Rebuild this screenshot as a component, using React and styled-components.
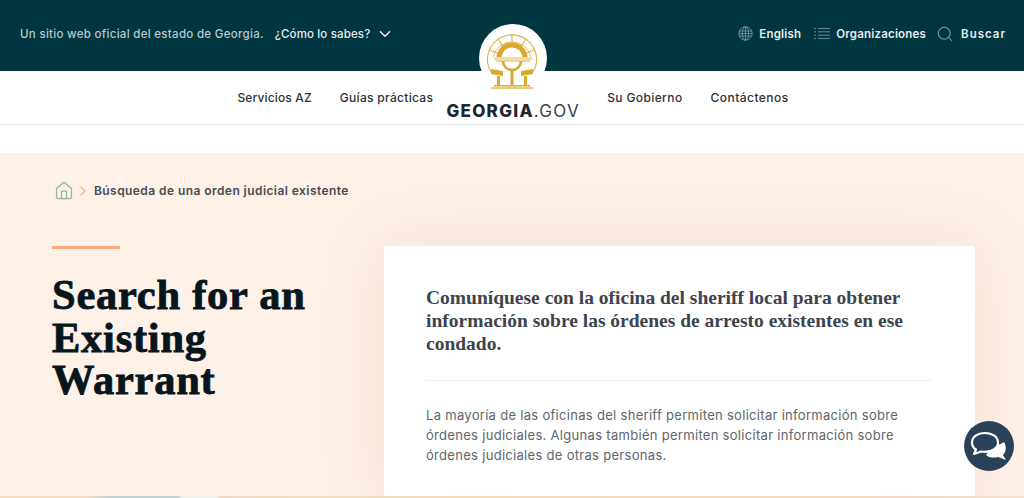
import React from 'react'
import styled, { createGlobalStyle } from 'styled-components'
import { ChevronDown, ChevronRight, Home, Search } from 'lucide-react'

const GlobalStyle = createGlobalStyle`
  html, body {
    margin: 0;
    padding: 0;
    height: 498px;
    overflow: hidden;
    background: #fff;
    font-family: "Inter", "Open Sans", sans-serif;
  }
`

const Page = styled.div`
  position: relative;
  width: 1024px;
  height: 498px;
  overflow: hidden;
`

const TopBar = styled.div`
  display: flex;
  align-items: center;
  justify-content: space-between;
  height: 71px;
  padding: 0 18px 4px 20px;
  box-sizing: border-box;
  background: #003640;
`

const TopGroup = styled.div`
  display: flex;
  align-items: center;
`

const Official = styled.span`
  font-size: 11.5px;
  font-weight: 500;
  letter-spacing: 0.3px;
  color: #b9c9cc;
  margin-right: 11px;
`

const HowLink = styled.span`
  font-size: 11.5px;
  font-weight: 500;
  letter-spacing: 0.15px;
  color: #e4ecee;
  margin-right: 6px;
`

const TopLink = styled.span`
  display: flex;
  align-items: center;
  gap: ${(p) => p.$gap || 6}px;
  margin-left: ${(p) => p.$left || 0}px;
  font-size: 11.5px;
  font-weight: 600;
  letter-spacing: ${(p) => p.$spacing || 0.2}px;
  color: #e4ecee;
  svg {
    color: #7f9a9f;
  }
`

const Nav = styled.div`
  display: flex;
  align-items: center;
  justify-content: center;
  height: 54px;
  padding-left: 2px;
  border-bottom: 1px solid #e8e8e8;
  box-sizing: border-box;
  background: #fff;
`

const NavItem = styled.span`
  font-size: 12px;
  font-weight: 500;
  letter-spacing: ${(p) => p.$spacing || 0.3}px;
  color: #2b3238;
  margin-left: ${(p) => p.$left || 0}px;
`

const Logo = styled.div`
  position: relative;
  width: 134px;
  margin: 0 27px 0 13px;
  height: 53px;
`

const LogoCircle = styled.div`
  position: absolute;
  top: -47px;
  left: 33px;
  width: 68px;
  height: 68px;
  border-radius: 50%;
  background: #fff;
  display: flex;
  justify-content: center;
  padding-top: 8px;
  box-sizing: border-box;
`

const LogoText = styled.div`
  position: absolute;
  left: -1px;
  right: -1px;
  top: 30px;
  text-align: center;
  white-space: nowrap;
  font-size: 17px;
  line-height: 20px;
  letter-spacing: 1.3px;
  font-weight: 800;
  color: #1c2730;
  span {
    font-weight: 400;
    color: #3a444c;
  }
`

const Spacer = styled.div`
  height: 28px;
  background: #fff;
`

const Hero = styled.div`
  height: 343px;
  background: #fef1e8;
  padding: 0 49px 0 52px;
  box-sizing: border-box;
`

const Crumbs = styled.div`
  display: flex;
  align-items: center;
  height: 76px;
  padding: 0 0 1px 2px;
  box-sizing: border-box;
  margin-bottom: 17px;
`

const CrumbText = styled.span`
  font-size: 12px;
  font-weight: 600;
  letter-spacing: 0.43px;
  color: #464c55;
  margin-left: 3px;
`

const Columns = styled.div`
  display: flex;
  align-items: flex-start;
`

const TitleCol = styled.div`
  width: 332px;
  flex: none;
`

const Accent = styled.div`
  width: 68px;
  height: 3px;
  background: #fca77c;
  margin-bottom: 25px;
`

const Title = styled.h1`
  margin: 0;
  font-family: "Liberation Serif", serif;
  font-size: 42.5px;
  line-height: 42.5px;
  font-weight: 700;
  color: #07151d;
  letter-spacing: 0.75px;
  -webkit-text-stroke: 0.8px #07151d;
`

const Card = styled.div`
  flex: 1;
  height: 250px;
  background: #fff;
  padding: 40px 42px 0;
  box-sizing: border-box;
  border-radius: 3px 3px 0 0;
  box-shadow: 0 0 60px rgba(190, 160, 130, 0.2);
`

const Lead = styled.p`
  margin: 0;
  font-family: "Liberation Serif", serif;
  font-size: 19.5px;
  line-height: 23px;
  font-weight: 700;
  color: #3d444d;
`

const Rule = styled.div`
  height: 1px;
  background: #f1f1f1;
  margin: 25px 0 24px;
`

const Body = styled.p`
  margin: 0;
  font-size: 13px;
  line-height: 20px;
  letter-spacing: 0.3px;
  color: #5e656c;
`

const BottomStrip = styled.div`
  height: 2px;
  background: linear-gradient(90deg, #f3dcc4 0, #f3dcc4 85px, #c4d0d2 110px, #c4d0d2 178px, #f1f0ea 182px, #f1f0ea 216px, #ecd9c4 220px, #f6e3c2 500px, #f5e0d0 1024px);
`

const ChatButton = styled.div`
  position: absolute;
  left: 964px;
  top: 421px;
  width: 50px;
  height: 50px;
  border-radius: 50%;
  background: #2a4258;
  display: flex;
  align-items: center;
  justify-content: center;
`

const Seal = () => (
  <svg width="54" height="58" viewBox="0 0 54 58" fill="none">
    <path d="M5 40 A24.500 24.500 0 1 1 47 40" stroke="#dcb045" strokeWidth="1.100" />
    <path d="M7 25 A19.500 19.500 0 0 1 45 25" stroke="#dcb045" strokeWidth="0.900" />
    <path d="M26 2v8M12 7l5 7M40 7l-5 7M4 18l7 3M48 18l-7 3" stroke="#dcb045" strokeWidth="1.100" />
    <path d="M13 26 A13 13 0 0 1 39 26" stroke="#d8a92f" strokeWidth="5" />
    <path d="M17 29 A9 9 0 0 0 35 29" stroke="#d8a92f" strokeWidth="2.600" />
    <path d="M8 25h38v3H8z" fill="#f3dc9c" />
    <path d="M10 29h34" stroke="#d8a92f" strokeWidth="1.200" />
    <path d="M5 37l12 2v5l-12-2zM47 37l-12 2v5l12-2z" fill="#d8a92f" />
    <path d="M24.500 38h3v15h-3zM11 44h3v9h-3zM38 44h3v9h-3z" fill="#d8a92f" />
    <path d="M8 53h36v1.500H8z" fill="#d8a92f" />
    <path d="M5 55h42v2H5z" fill="#ecca76" />
  </svg>
)

const GlobeIcon = () => (
  <svg width="15" height="15" viewBox="0 0 15 15" fill="none" stroke="currentColor" strokeWidth="0.800">
    <circle cx="7.500" cy="7.500" r="6.700" />
    <ellipse cx="7.500" cy="7.500" rx="3.200" ry="6.700" />
    <path d="M7.500.8v13.400M1 5h13M.8 7.500h13.400M1 10h13" />
  </svg>
)

const ListIcon = () => (
  <svg width="16" height="11" viewBox="0 0 16 11" fill="none" stroke="currentColor" strokeWidth="0.800">
    <path d="M0 .5h2M4 .5h12M0 3.800h2M4 3.800h12M0 7.200h2M4 7.200h12M0 10.500h2M4 10.500h12" />
  </svg>
)

const ChatIcon = () => (
  <svg width="38" height="30" viewBox="0 0 38 30" fill="none">
    <path d="M24 14c4 0 8-1 10-3 3 5 2 10-1 13l3 5-8-3c-4 1-9 1-12-2z" fill="#fff" />
    <path
      d="M15 2C7.500 2 2 6 2 11.500c0 3 1.500 5.500 4 7l-2 4.500 7-2.500c1.300.3 2.700.4 4 .4 7.500 0 13-4 13-9.400S22.500 2 15 2z"
      fill="#2a4258"
      stroke="#fff"
      strokeWidth="2.200"
      strokeLinejoin="round"
    />
  </svg>
)

const App = () => (
  <Page>
    <GlobalStyle />
    <TopBar>
      <TopGroup>
        <Official>Un sitio web oficial del estado de Georgia.</Official>
        <HowLink>¿Cómo lo sabes?</HowLink>
        <ChevronDown size={18} color="#e4ecee" />
      </TopGroup>
      <TopGroup>
        <TopLink>
          <GlobeIcon />
          English
        </TopLink>
        <TopLink $left={13}>
          <ListIcon />
          Organizaciones
        </TopLink>
        <TopLink $left={10} $gap={7} $spacing={1}>
          <Search size={18} strokeWidth={1.4} />
          Buscar
        </TopLink>
      </TopGroup>
    </TopBar>
    <Nav>
      <NavItem $spacing={0.15}>Servicios AZ</NavItem>
      <NavItem $left={28}>Guías prácticas</NavItem>
      <Logo>
        <LogoCircle>
          <Seal />
        </LogoCircle>
        <LogoText>
          GEORGIA<span>.GOV</span>
        </LogoText>
      </Logo>
      <NavItem $spacing={0.38}>Su Gobierno</NavItem>
      <NavItem $left={28} $spacing={0.45}>Contáctenos</NavItem>
    </Nav>
    <Spacer />
    <Hero>
      <Crumbs>
        <Home size={20} strokeWidth={1.5} color="#8fb3a3" />
        <ChevronRight size={16} strokeWidth={1.8} color="#f5b48c" style={{ marginLeft: 1 }} />
        <CrumbText>Búsqueda de una orden judicial existente</CrumbText>
      </Crumbs>
      <Columns>
        <TitleCol>
          <Accent />
          <Title>
            Search for an
            <br />
            Existing
            <br />
            Warrant
          </Title>
        </TitleCol>
        <Card>
          <Lead>
            Comuníquese con la oficina del sheriff local para obtener información sobre las órdenes de arresto existentes en ese condado.
          </Lead>
          <Rule />
          <Body>
            La mayoría de las oficinas del sheriff permiten solicitar información sobre órdenes judiciales. Algunas también permiten solicitar información sobre órdenes judiciales de otras personas.
          </Body>
        </Card>
      </Columns>
    </Hero>
    <BottomStrip />
    <ChatButton>
      <ChatIcon />
    </ChatButton>
  </Page>
)

export default App
